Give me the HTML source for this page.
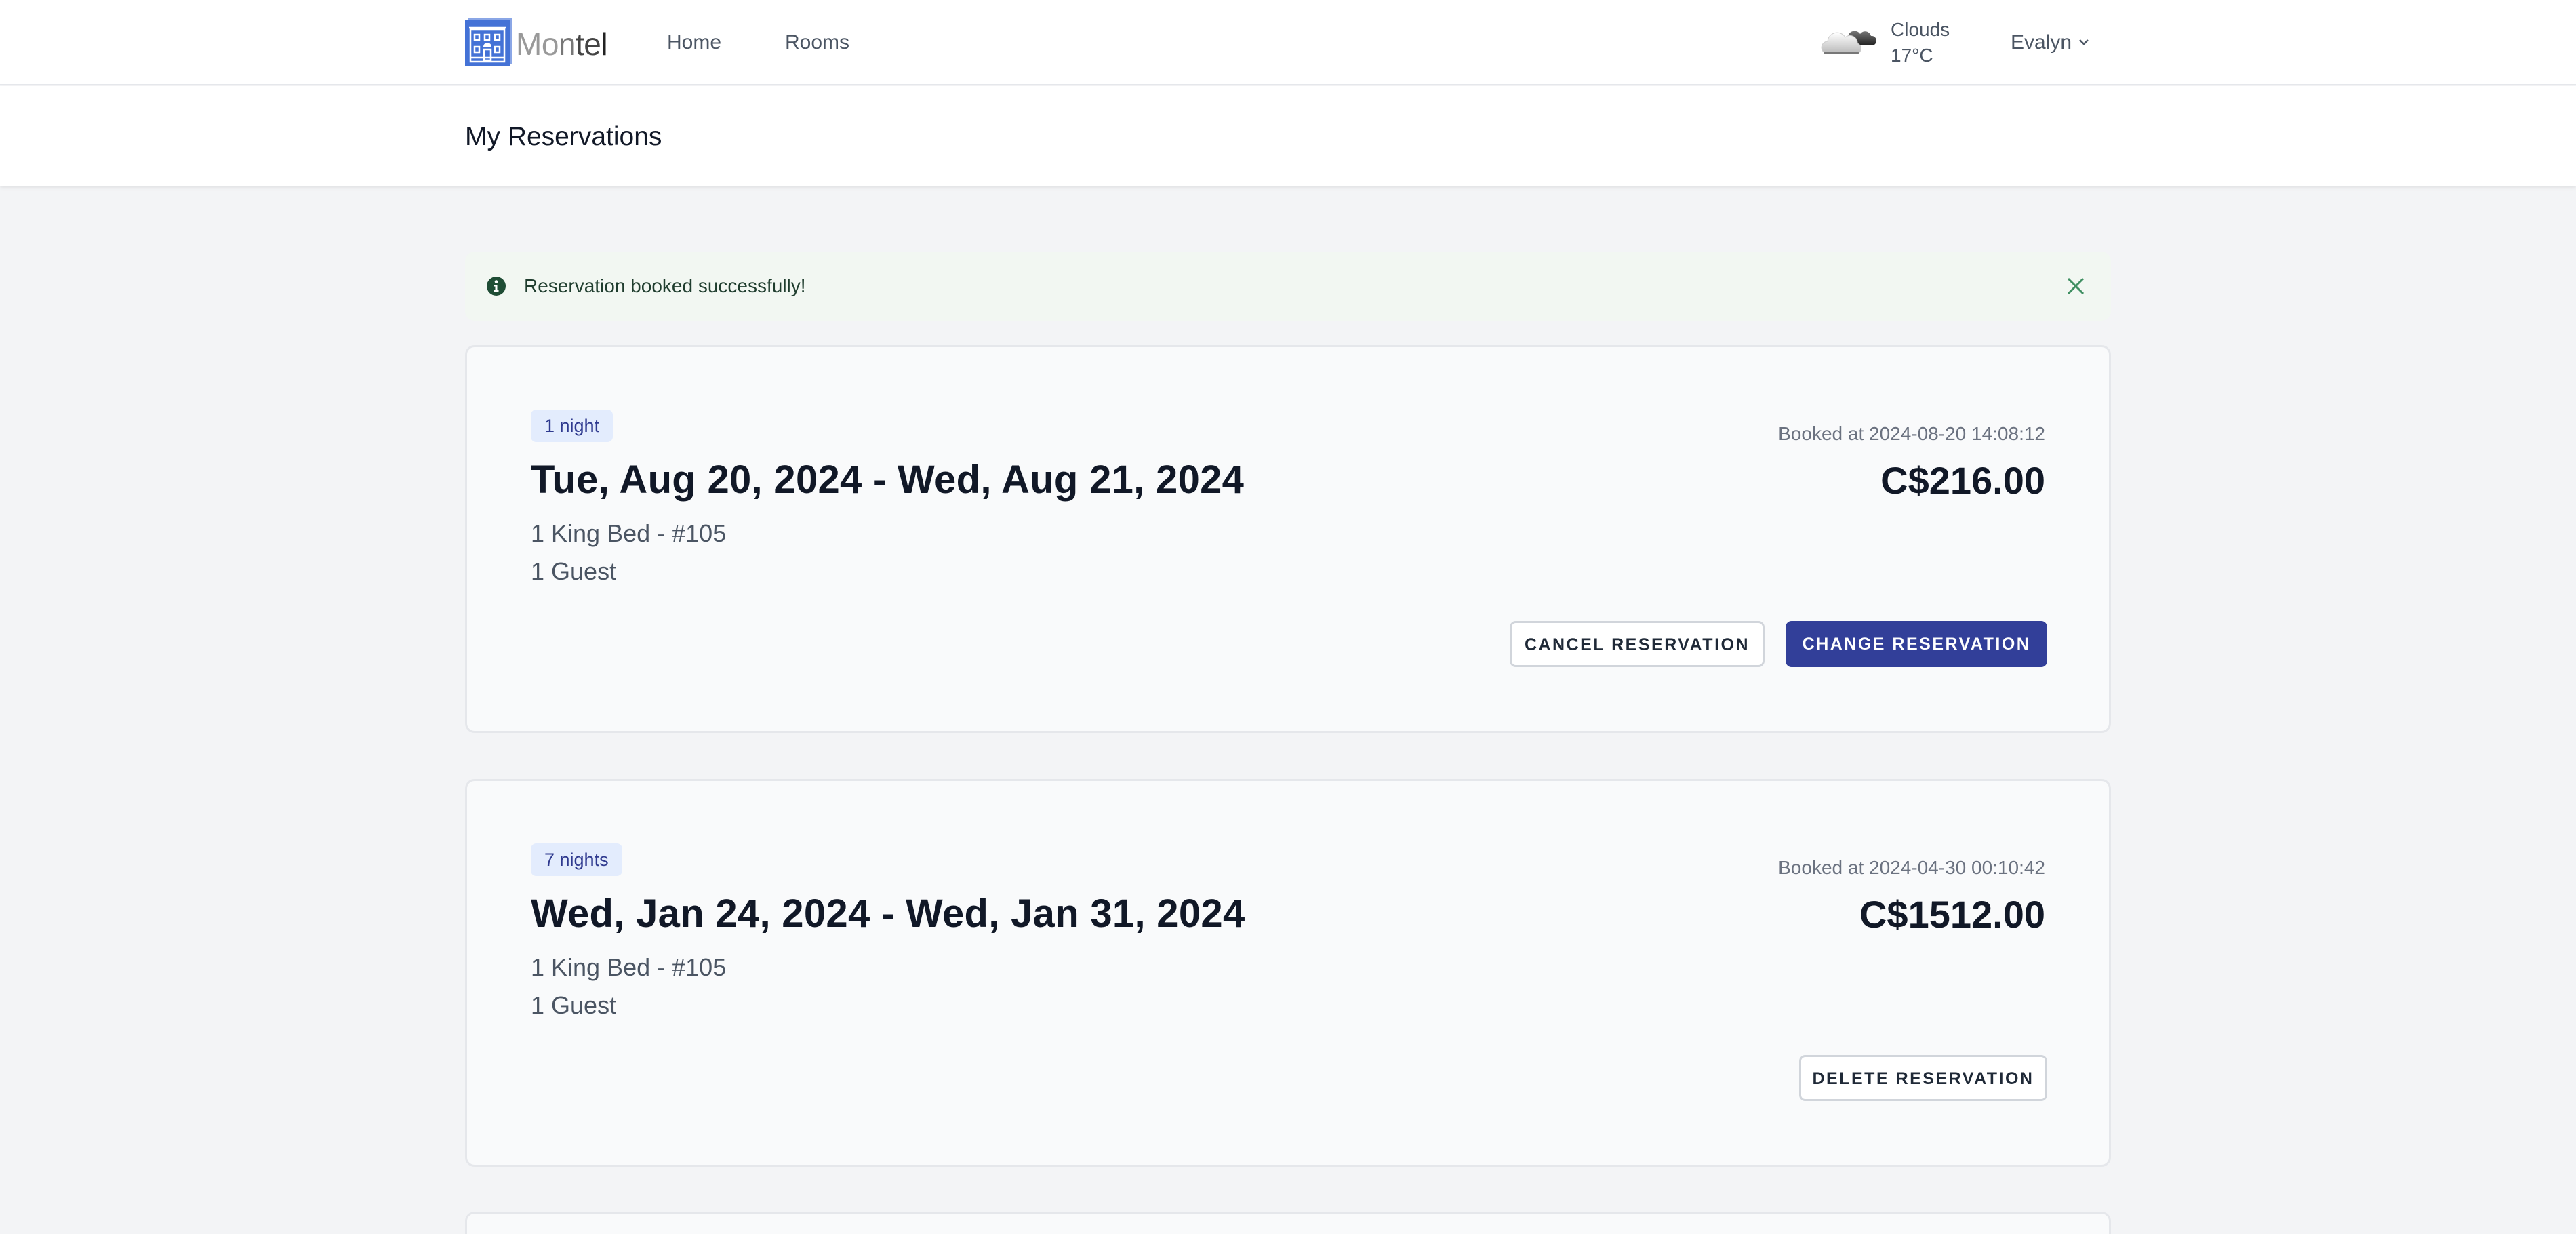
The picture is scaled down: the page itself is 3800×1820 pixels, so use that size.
<!DOCTYPE html>
<html><head><meta charset="utf-8"><style>
*{margin:0;padding:0;box-sizing:border-box}
html,body{width:3800px;height:1820px;overflow:hidden}
body{background:#f3f4f6;font-family:"Liberation Sans",sans-serif;position:relative}
.a{position:absolute;white-space:nowrap}
.header{position:absolute;left:0;top:0;width:3800px;height:126px;background:#fff;border-bottom:2px solid #e5e7eb}
.band{position:absolute;left:0;top:127px;width:3800px;height:147px;background:#fff;box-shadow:0 3px 5px rgba(0,0,0,.08)}
.card{position:absolute;left:686px;width:2428px;height:572px;background:#f9fafb;border:3px solid #e5e7eb;border-radius:14px}
.badge{position:absolute;left:94px;top:92px;height:48px;padding:0 20px;background:#e3ecfd;border-radius:8px;color:#2f3a8f;font-size:27px;line-height:48px}
.date{position:absolute;left:94px;top:162px;font-size:58px;font-weight:600;color:#111827;letter-spacing:0.3px}
.l1{position:absolute;left:94px;top:254px;font-size:36px;color:#4b5563}
.l2{position:absolute;left:94px;top:310px;font-size:36px;color:#4b5563}
.bk{position:absolute;right:94px;top:112px;font-size:28px;color:#6b7280}
.price{position:absolute;right:94px;top:164px;font-size:56px;font-weight:600;color:#111827}
.btn{position:absolute;top:404px;height:68px;border-radius:9px;font-size:25px;font-weight:600;letter-spacing:2.5px;text-align:center;line-height:64px}
.w{background:#fff;border:3px solid #d1d5db;color:#1f2937}
.b{background:#323f99;border:2px solid #323f99;color:#fff}
</style></head><body>
<div class="header"></div>
<svg class="a" style="left:686px;top:27px" width="70" height="70" viewBox="0 0 70 70">
<rect x="4" y="0" width="66" height="68" fill="#8aa6e6"/>
<rect x="0" y="2" width="66" height="68" fill="#4472d6"/>
<g fill="none" stroke="#fff" stroke-width="2.5">
<rect x="8" y="16" width="50" height="48"/><line x1="6" y1="14" x2="60" y2="14"/>
<rect x="14" y="24" width="7" height="8"/><rect x="29" y="24" width="7" height="8"/><rect x="44" y="24" width="7" height="8"/>
<rect x="14" y="42" width="7" height="8"/><rect x="44" y="42" width="7" height="8"/>
<rect x="28" y="46" width="10" height="16"/><line x1="8" y1="58" x2="58" y2="58"/></g>
<path d="M27 42a6 6 0 0 1 12 0z" fill="#fff"/></svg>
<div class="a" style="left:761px;top:38px;font-size:46px;color:#555;letter-spacing:-0.5px"><span style="color:#999">Mo</span><span style="color:#777">n</span><span style="color:#444">te</span><span style="color:#222">l</span></div>
<div class="a" style="left:984px;top:46px;font-size:30px;color:#4b5563">Home</div>
<div class="a" style="left:1158px;top:46px;font-size:30px;color:#4b5563">Rooms</div>
<svg class="a" style="left:2684px;top:34px" width="90" height="50" viewBox="0 0 90 50">
<defs><linearGradient id="g1" x1="0" y1="0" x2="0" y2="1"><stop offset="0" stop-color="#fff"/><stop offset="1" stop-color="#bbb"/></linearGradient>
<linearGradient id="g2" x1="0" y1="0" x2="0" y2="1"><stop offset="0" stop-color="#777"/><stop offset="1" stop-color="#222"/></linearGradient></defs>
<path d="M42 24a10 10 0 0 1 18-8a9 9 0 0 1 16 3a7 7 0 0 1 2 14h-32z" fill="url(#g2)"/>
<path d="M8 44a9 9 0 0 1 4-17a14 14 0 0 1 26-6a11 11 0 0 1 18 9a8 8 0 0 1 2 14z" fill="url(#g1)" stroke="#ccc"/>
<rect x="6" y="42" width="52" height="4" rx="2" fill="#777"/></svg>
<div class="a" style="left:2789px;top:28px;font-size:28px;color:#4b5563">Clouds</div>
<div class="a" style="left:2789px;top:66px;font-size:28px;color:#4b5563">17°C</div>
<div class="a" style="left:2966px;top:46px;font-size:30px;color:#4b5563">Evalyn</div>
<svg class="a" style="left:3066px;top:56px" width="16" height="12" viewBox="0 0 16 12"><path d="M2 3l6 6 6-6" fill="none" stroke="#4b5563" stroke-width="2.5"/></svg>
<div class="band"></div>
<div class="a" style="left:686px;top:180px;font-size:39px;color:#111827">My Reservations</div>
<div class="a" style="left:686px;top:371px;width:2428px;height:102px;background:#f2f7f2;border-radius:14px"></div>
<svg class="a" style="left:717px;top:407px" width="30" height="30" viewBox="0 0 30 30"><circle cx="15" cy="15" r="14" fill="#1f4d35"/><circle cx="15" cy="8.5" r="2.3" fill="#fff"/><path d="M12 13h4.5v8h2v2.5h-7V21h2v-5.5h-1.5z" fill="#fff"/></svg>
<div class="a" style="left:773px;top:406px;font-size:28px;color:#1f3d2e">Reservation booked successfully!</div>
<svg class="a" style="left:3048px;top:408px" width="28" height="28" viewBox="0 0 28 28"><path d="M3 3l22 22M25 3L3 25" stroke="#3f8f62" stroke-width="3"/></svg>

<div class="card" style="top:509px">
<div class="badge">1 night</div>
<div class="date">Tue, Aug 20, 2024 - Wed, Aug 21, 2024</div>
<div class="l1">1 King Bed - #105</div><div class="l2">1 Guest</div>
<div class="bk">Booked at 2024-08-20 14:08:12</div>
<div class="price">C$216.00</div>
<div class="btn w" style="left:1538px;width:376px">CANCEL RESERVATION</div>
<div class="btn b" style="left:1945px;width:386px">CHANGE RESERVATION</div>
</div>

<div class="card" style="top:1149px">
<div class="badge">7 nights</div>
<div class="date">Wed, Jan 24, 2024 - Wed, Jan 31, 2024</div>
<div class="l1">1 King Bed - #105</div><div class="l2">1 Guest</div>
<div class="bk">Booked at 2024-04-30 00:10:42</div>
<div class="price">C$1512.00</div>
<div class="btn w" style="left:1965px;width:366px">DELETE RESERVATION</div>
</div>

<div class="card" style="top:1787px;height:33px;border-bottom:none;border-radius:14px 14px 0 0"></div>
</body></html>
